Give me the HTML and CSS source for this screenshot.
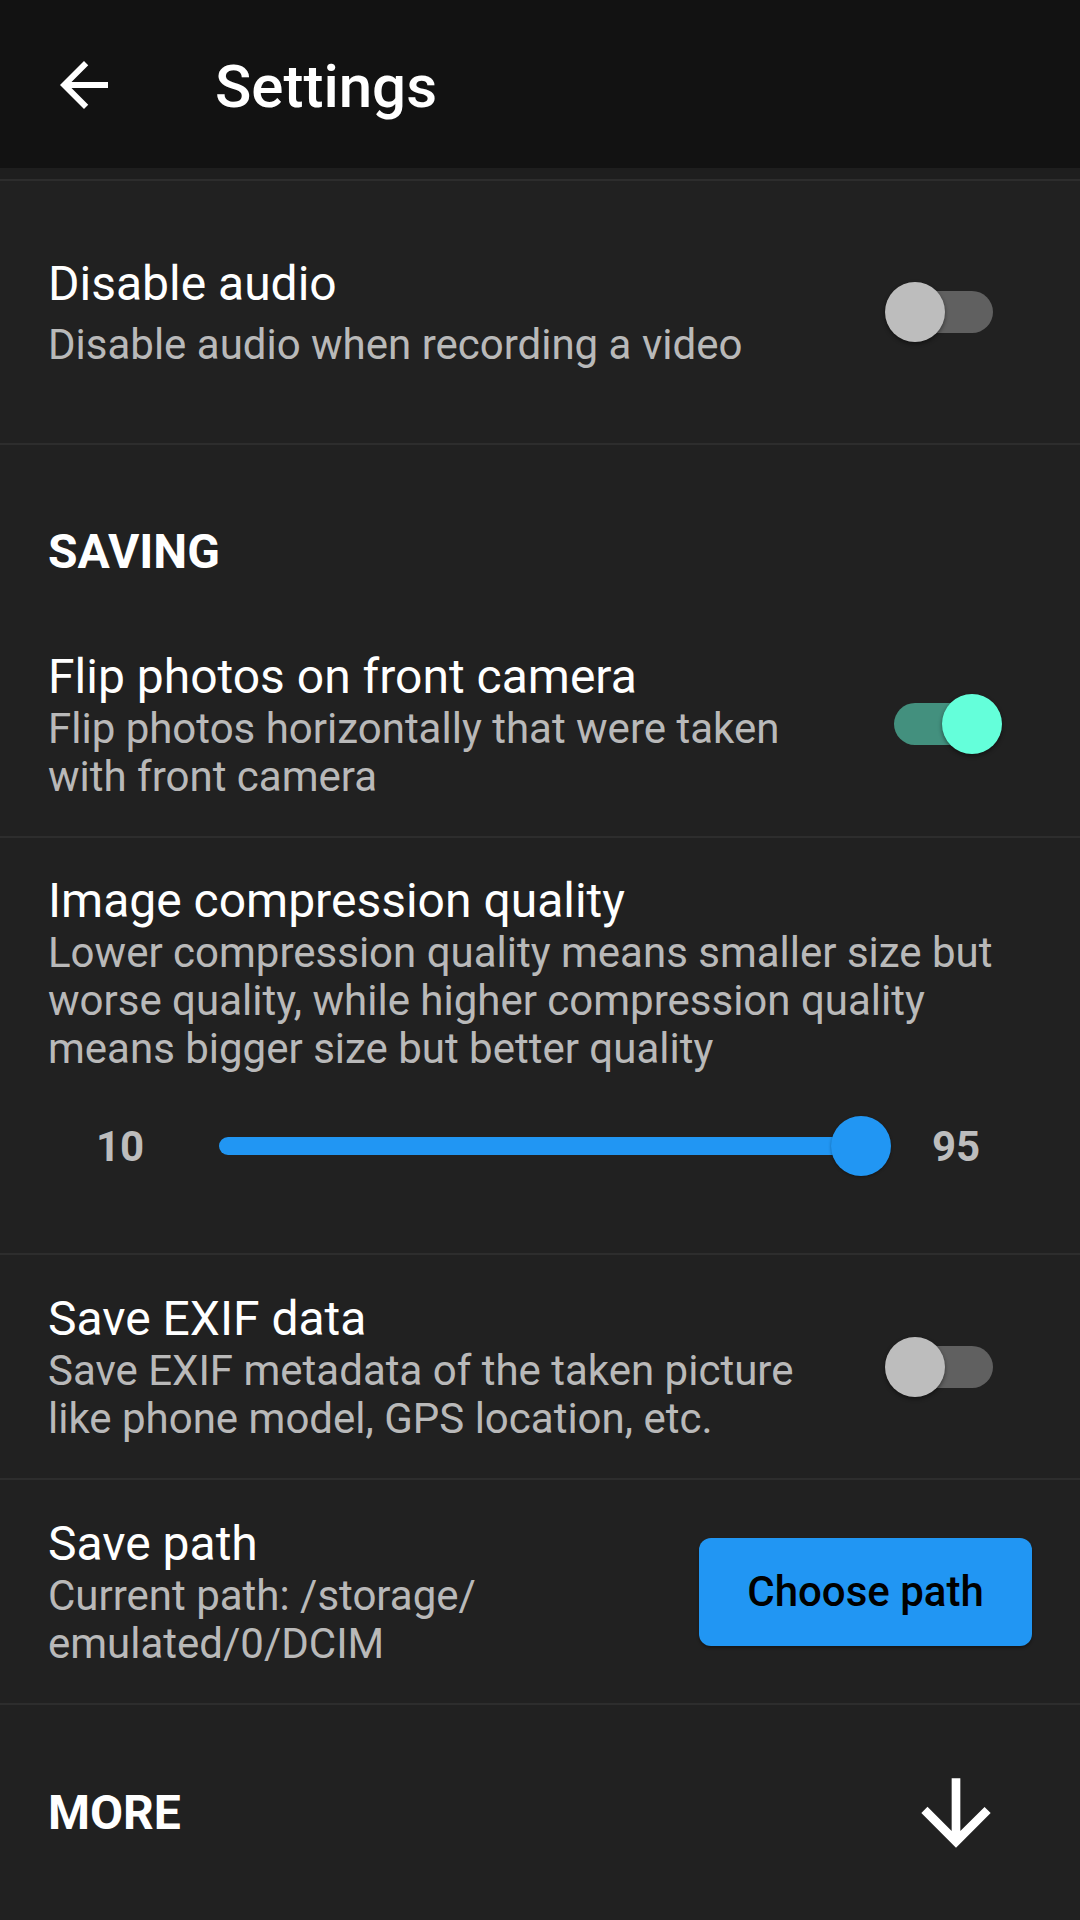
FILE: index.html
```html
<!DOCTYPE html>
<html lang="en">
<head>
<meta charset="utf-8">
<title>Settings</title>
<link rel="stylesheet" href="styles.css">
</head>
<body>
<div class="app">
  <header class="appbar">
    <span class="back" aria-label="Back">
      <svg viewBox="0 0 24 24" width="72" height="72"><path fill="#fff" d="M20 11H7.83l5.59-5.59L12 4l-8 8 8 8 1.41-1.41L7.83 13H20v-2z"/></svg>
    </span>
    <h1 class="appbar-title">Settings</h1>
  </header>
  <div class="scroll-tail"></div>
  <div class="divider"></div>

  <section class="pref pref-single">
    <div class="pref-text">
      <div class="pref-title">Disable audio</div>
      <div class="pref-desc pref-desc-gap">Disable audio when recording a video</div>
    </div>
    <div class="switch switch-off"><span class="switch-track"></span><span class="switch-thumb"></span></div>
  </section>
  <div class="divider"></div>

  <div class="category">SAVING</div>

  <section class="pref pref-short pref-flip">
    <div class="pref-text">
      <div class="pref-title">Flip photos on front camera</div>
      <div class="pref-desc">Flip photos horizontally that were taken with front camera</div>
    </div>
    <div class="switch switch-on"><span class="switch-track"></span><span class="switch-thumb"></span></div>
  </section>
  <div class="divider"></div>

  <section class="pref-block">
    <div class="pref-title">Image compression quality</div>
    <div class="pref-desc">Lower compression quality means smaller size but worse quality, while higher compression quality means bigger size but better quality</div>
    <div class="slider-row">
      <span class="slider-label">10</span>
      <div class="slider">
        <span class="slider-track"></span>
        <span class="slider-thumb" style="left: calc(100% - 60px);"></span>
      </div>
      <span class="slider-label">95</span>
    </div>
  </section>
  <div class="divider"></div>

  <section class="pref pref-short">
    <div class="pref-text">
      <div class="pref-title">Save EXIF data</div>
      <div class="pref-desc">Save EXIF metadata of the taken picture like phone model, GPS location, etc.</div>
    </div>
    <div class="switch switch-off"><span class="switch-track"></span><span class="switch-thumb"></span></div>
  </section>
  <div class="divider"></div>

  <section class="pref pref-short">
    <div class="pref-text pref-text-path">
      <div class="pref-title">Save path</div>
      <div class="pref-desc">Current path: /storage/<wbr>emulated/0/DCIM</div>
    </div>
    <button class="btn-primary">Choose path</button>
  </section>
  <div class="divider"></div>

  <section class="more-row">
    <span class="more-label">MORE</span>
    <svg class="more-icon" viewBox="0 0 24 24" width="104" height="104"><path fill="#fff" d="M20 12l-1.41-1.41L13 16.17V4h-2v12.17l-5.58-5.59L4 12l8 8 8-8z"/></svg>
  </section>
</div>
</body>
</html>
```
FILE: styles.css
```css
* { box-sizing: border-box; }
html, body {
  margin: 0;
  padding: 0;
  background: #212121;
}
body {
  font-family: Roboto, "Noto Sans", "Liberation Sans", sans-serif;
  color: #fff;
  width: 1080px;
  height: 1920px;
  overflow: hidden;
}
.app {
  display: flex;
  flex-direction: column;
}
.appbar {
  height: 168px;
  background: #121212;
  display: flex;
  align-items: center;
}
.back {
  display: flex;
  margin-left: 48px;
  margin-top: 2px;
  width: 72px;
  height: 72px;
}
.appbar-title {
  margin: 6px 0 0 95px;
  font-size: 60px;
  font-weight: 500;
  line-height: 70px;
  letter-spacing: 0;
}
.scroll-tail {
  height: 11px;
  background: #1e1e1e;
}
.divider {
  height: 2px;
  background: #2d2d2d;
  flex: none;
}
.pref {
  display: flex;
  align-items: center;
  padding: 0 0 0 48px;
}
.pref-single { height: 262px; }
.pref-short { height: 223px; }
.pref-flip { height: 224px; }
.pref-text {
  flex: 1;
  min-width: 0;
}
.pref-title {
  font-size: 48px;
  line-height: 57px;
  color: #fff;
}
.pref-desc {
  font-size: 42px;
  line-height: 48px;
  color: rgba(255, 255, 255, 0.7);
}
.pref-desc-gap { margin-top: 9px; }

.switch {
  position: relative;
  flex: none;
  width: 114px;
  height: 60px;
  margin-left: 48px;
}
.switch-off { margin-right: 81px; }
.switch-on { margin-right: 78px; }
.switch-track {
  position: absolute;
  left: 6px;
  top: 9px;
  width: 102px;
  height: 42px;
  border-radius: 21px;
}
.switch-thumb {
  position: absolute;
  top: 0;
  width: 60px;
  height: 60px;
  border-radius: 50%;
  box-shadow: 0 2px 4px rgba(0, 0, 0, 0.45);
}
.switch-off .switch-track { background: #606060; }
.switch-off .switch-thumb { left: 0; background: #bdbdbd; }
.switch-on .switch-track { background: #43907e; }
.switch-on .switch-thumb { left: 54px; background: #64ffda; }

.category {
  height: 167px;
  padding: 79px 48px 0;
  font-size: 48px;
  font-weight: 700;
  line-height: 56px;
}

.pref-block {
  padding: 34px 48px 77px;
}
.slider-row {
  display: flex;
  align-items: center;
  height: 60px;
  margin-top: 43px;
  padding: 0 28px 0 24px;
}
.slider-label {
  flex: none;
  width: 96px;
  text-align: center;
  font-size: 42px;
  font-weight: 700;
  color: #bdbdbd;
}
.slider {
  position: relative;
  flex: 1;
  height: 60px;
  margin: 0 17px 0 51px;
}
.slider-track {
  position: absolute;
  left: 0;
  right: 20px;
  top: 21px;
  height: 18px;
  border-radius: 9px;
  background: #2196f3;
}
.slider-thumb {
  position: absolute;
  top: 0;
  width: 60px;
  height: 60px;
  border-radius: 50%;
  background: #2196f3;
  box-shadow: 0 1px 3px rgba(0, 0, 0, 0.35);
}

.pref-text-path { padding-right: 32px; }
.btn-primary {
  flex: none;
  width: 333px;
  height: 108px;
  margin-right: 48px;
  border: none;
  border-radius: 12px;
  background: #2196f3;
  color: #000;
  font-family: Roboto, "Noto Sans", "Liberation Sans", sans-serif;
  font-size: 42px;
  font-weight: 500;
  padding: 0;
  box-shadow: 0 2px 3px rgba(0, 0, 0, 0.35);
}

.more-row {
  display: flex;
  align-items: center;
  height: 215px;
  padding: 0 72px 0 48px;
}
.more-label {
  flex: 1;
  font-size: 48px;
  font-weight: 700;
  line-height: 56px;
}
.more-icon {
  flex: none;
}
```
